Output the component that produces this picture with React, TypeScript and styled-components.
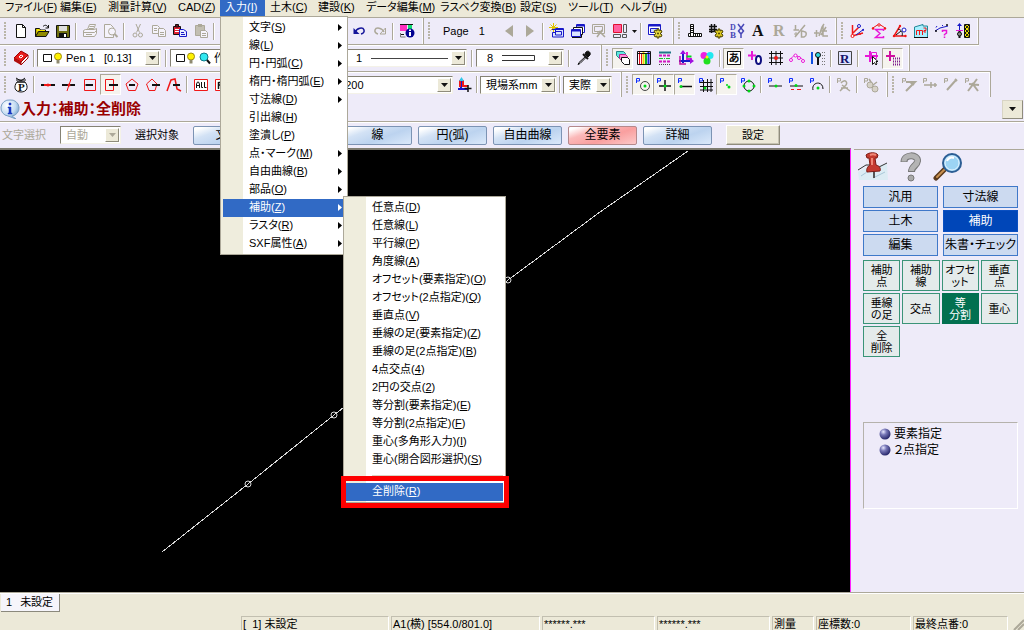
import React, { ReactNode } from "react";
import styled, { createGlobalStyle, css } from "styled-components";

const GlobalStyle = createGlobalStyle`
  *, *::before, *::after { box-sizing: border-box; }
  body { margin: 0; background: #ece9d8; }
  body, button, select, input {
    font-family: "Liberation Sans", "Noto Sans CJK JP", sans-serif;
    font-size: 11px;
    line-height: 14px;
    font-feature-settings: "palt";
    color: #000;
  }
  button { margin: 0; padding: 0; border: 0; background: none; white-space: nowrap; }
`;

const Page = styled.div`
  display: flex;
  flex-direction: column;
  min-height: 100vh;
  background: #eeebf9;
`;

/* ---------- menu bar ---------- */

const MenuBar = styled.nav`
  display: flex;
  height: 18px;
  padding-bottom: 1px;
  background: #ece9d8;
  border-bottom: 1px solid #aca899;
`;

const MenuSlot = styled.div<{ $w: number }>`
  position: relative;
  flex: 0 0 ${(p) => p.$w}px;
  min-width: 0;
`;

const MenuTitle = styled.button<{ $open?: boolean }>`
  width: 100%;
  height: 16px;
  padding-left: 5px;
  padding-bottom: 2px;
  text-align: left;
  color: ${(p) => (p.$open ? "#fff" : "#000")};
  background: ${(p) => (p.$open ? "#316ac5" : "transparent")};
`;

const Popup = styled.div<{ $sub?: boolean }>`
  position: absolute;
  z-index: ${(p) => (p.$sub ? 30 : 20)};
  top: ${(p) => (p.$sub ? "-3px" : "100%")};
  left: ${(p) => (p.$sub ? "calc(100% - 2px)" : "0")};
  width: ${(p) => (p.$sub ? 163 : 128)}px;
  padding: 2px 2px 1px;
  border: 1px solid #aca899;
  background: linear-gradient(90deg, #efeddd 22px, #fff 22px);
`;

const EntryBox = styled.div`
  position: relative;
`;

const Entry = styled.button<{ $on?: boolean }>`
  display: flex;
  align-items: center;
  justify-content: space-between;
  width: 100%;
  height: 18px;
  padding: 0 3px 2px 26px;
  color: ${(p) => (p.$on ? "#fff" : "#000")};
  background: ${(p) => (p.$on ? "#316ac5" : "transparent")};
`;

const Separator = styled.hr`
  height: 14px;
  margin: 0 0 0 26px;
  border: 0;
  background: linear-gradient(transparent 6px, #d8d4c4 6px, #d8d4c4 8px, transparent 8px);
`;

const RedFrame = styled.span`
  position: absolute;
  z-index: 40;
  inset: -7px -6px -7px -5px;
  border: 5px solid #fe0000;
  pointer-events: none;
`;

/* ---------- toolbars ---------- */

const ToolRow = styled.div<{ $line?: "top" | "bottom" }>`
  display: flex;
  align-self: flex-start;
  min-width: ${(p) => (p.$line ? "0" : "100%")};
  height: ${(p) => (p.$line === "bottom" ? 27 : 26)}px;
  ${(p) => p.$line === "bottom" && css`border-bottom: 1px solid #aca899; box-shadow: 0 1px #fff;`}
  ${(p) => p.$line === "top" && css`border-top: 1px solid #aca899; box-shadow: inset 0 1px #fff;`}
`;

const Band = styled.div<{ $w: number }>`
  display: flex;
  align-items: center;
  flex: 0 0 ${(p) => p.$w}px;
  border-right: 1px solid #aca899;
  box-shadow: inset -1px 0 #fbfaff;
`;

const Group = styled.div<{ $end?: number }>`
  display: flex;
  align-items: center;
  ${(p) => p.$end !== undefined && css`margin-left: auto; padding-right: ${p.$end}px;`}
`;

const Grip = styled.span`
  flex: 0 0 10px;
  height: 18px;
  background: repeating-linear-gradient(#b9b5a8 0 2px, transparent 2px 3px) 4px 0 / 2px 100% no-repeat;
`;

const Divider = styled.span<{ $wide?: boolean }>`
  flex: 0 0 ${(p) => (p.$wide ? 9 : 6)}px;
  height: 17px;
  background: linear-gradient(90deg, #aca899 50%, #fff 50%) center / 2px 100% no-repeat;
`;

const ToolButton = styled.button<{ $pressed?: boolean; $narrow?: boolean }>`
  display: flex;
  align-items: center;
  justify-content: center;
  flex: none;
  width: ${(p) => (p.$narrow ? 8 : 21)}px;
  height: 21px;
  border: 1px solid transparent;
  ${(p) =>
    p.$pressed &&
    css`
      border-color: #aca899 #fff #fff #aca899;
      background: #f5f3ee;
    `}
`;

const IconArt = styled.svg`
  flex: none;
  overflow: visible;
`;

const PageLabel = styled.span`
  display: flex;
  gap: 10px;
  padding-left: 9px;
`;

const Combo = styled.div<{ $w: number; $inset?: boolean }>`
  display: flex;
  align-items: center;
  gap: 3px;
  flex: 0 0 ${(p) => p.$w}px;
  height: 18px;
  padding: 1px 1px 1px ${(p) => (p.$inset ? 10 : 5)}px;
  border: 1px solid;
  border-color: #858274 #f4f2e8 #f4f2e8 #858274;
  background: #fff;
`;

const Choice = styled.select<{ $w?: number }>`
  appearance: none;
  flex: ${(p) => (p.$w ? `0 0 ${p.$w}px` : "1")};
  min-width: 0;
  height: 14px;
  padding: 0;
  border: 0;
  background: transparent;
  opacity: 1;
  &:disabled { color: #aca899; }
`;

const Arrow = styled.span`
  display: flex;
  align-items: center;
  justify-content: center;
  flex: 0 0 14px;
  height: 14px;
  margin-left: auto;
  border: 1px solid;
  border-color: #fff #8f8c7c #8f8c7c #fff;
  background: #ece9d8;
`;

/* ---------- command title and option row ---------- */

const TitleRow = styled.div`
  display: flex;
  align-items: center;
  justify-content: space-between;
  height: 24px;
  padding: 0 1px 0 0;
`;

const CommandTitle = styled.h1`
  display: flex;
  align-items: center;
  gap: 1px;
  margin: 0;
  font-size: 15px;
  line-height: 20px;
  color: #990000;
`;

const DropButton = styled.button`
  display: flex;
  align-items: center;
  justify-content: center;
  width: 21px;
  height: 19px;
  border: 1px solid;
  border-color: #d8d4c4 #8f8c7c #8f8c7c #d8d4c4;
  background: #ece9d8;
`;

const OptionRow = styled.div`
  display: flex;
  align-items: center;
  gap: 14px;
  height: 27px;
  padding: 0 2px;
  border-top: 1px solid #aca899;
  box-shadow: inset 0 1px #fff;
`;

const OptionLabel = styled.label<{ $dim?: boolean }>`
  flex: 0 0 44px;
  white-space: nowrap;
  color: ${(p) => (p.$dim ? "#aca899" : "#000")};
`;

const Filters = styled.div`
  display: flex;
  gap: 6px;
`;

const Filter = styled.button<{ $hot?: boolean }>`
  width: 69px;
  height: 19px;
  font-size: 12px;
  border: 1px solid ${(p) => (p.$hot ? "#b5898c" : "#7c93b4")};
  border-radius: 2px;
  background: ${(p) =>
    p.$hot
      ? "linear-gradient(160deg, #fff 0 8%, #fbb9b9 30%, #f99f9f 60%, #fcc9c9)"
      : "linear-gradient(160deg, #fff 0 8%, #d3e2f5 30%, #bcd3ef 60%, #dbe9fa)"};
`;

const PlainButton = styled.button`
  width: 54px;
  height: 20px;
  border: 1px solid;
  border-color: #fff #8f8c7c #8f8c7c #fff;
  box-shadow: inset -1px -1px #c5c2b2;
  background: #ece9d8;
`;

/* ---------- work area ---------- */

const WorkArea = styled.main`
  display: flex;
  flex: 1;
`;

const Canvas = styled.section`
  flex: 1;
  position: relative;
  min-height: 360px;
  border-top: 2px solid #7d7b6f;
  border-right: 1px solid #ff20ff;
  background: #000;
`;

const Drawing = styled.svg`
  position: absolute;
  inset: 0;
  width: 100%;
  height: 100%;
`;

const SidePanel = styled.aside`
  flex: 0 0 173px;
  padding: 0 6px 0 12px;
  background: linear-gradient(#aca899, #aca899) 3px 1px / 100% 1px no-repeat, #eeebf9;
`;

const PanelTools = styled.div`
  display: flex;
  align-items: center;
  gap: 10px;
  height: 38px;
  margin-left: -6px;
`;

const CategoryGrid = styled.div`
  display: grid;
  grid-template-columns: 1fr 1fr;
  gap: 2px 5px;
`;

const Category = styled.button<{ $on?: boolean }>`
  height: 22px;
  font-size: 12px;
  border: 1px solid ${(p) => (p.$on ? "#0a4fc0" : "#3f78c9")};
  color: ${(p) => (p.$on ? "#fff" : "#000")};
  background: ${(p) => (p.$on ? "#0046b8" : "#ccdaf0")};
`;

const CommandGrid = styled.div`
  display: grid;
  grid-template-columns: repeat(4, 1fr);
  gap: 2px;
  margin-top: 4px;
`;

const Command = styled.button<{ $on?: boolean }>`
  height: 31px;
  line-height: 12px;
  white-space: pre-line;
  border: 1px solid ${(p) => (p.$on ? "#027050" : "#3a9478")};
  color: ${(p) => (p.$on ? "#fff" : "#000")};
  background: ${(p) => (p.$on ? "#027050" : "#e4ebeb")};
`;

const ModeBox = styled.div`
  display: flex;
  flex-direction: column;
  align-items: flex-start;
  height: 87px;
  margin-top: 65px;
  padding: 3px 0 0 15px;
  border: 1px solid;
  border-color: #b5b2ac #fff #fff #b5b2ac;
`;

const Mode = styled.button`
  display: flex;
  align-items: center;
  gap: 3px;
  height: 16px;
  font-size: 12px;
`;

/* ---------- footer ---------- */

const SheetBar = styled.div`
  height: 24px;
  padding-left: 1px;
  border-top: 1px solid #aca899;
  box-shadow: inset 0 1px #fff;
  background: #ece9d8;
`;

const SheetTab = styled.button`
  display: flex;
  gap: 8px;
  align-items: center;
  height: 18px;
  margin-top: 1px;
  padding: 0 6px 2px 5px;
  border: solid #8b897c;
  border-width: 0 1px 1px 0;
  background: #f6f5fb;
`;

const StatusBar = styled.footer`
  display: flex;
  justify-content: flex-end;
  gap: 2px;
  height: 14px;
  background: #ece9d8;
`;

const StatusCell = styled.span<{ $w: number }>`
  flex: 0 0 ${(p) => p.$w}px;
  height: 14px;
  padding-left: 1px;
  overflow: hidden;
  white-space: pre;
  border: solid;
  border-width: 1px 1px 0 1px;
  border-color: #c2bfb0 #fff #fff #c2bfb0;
`;

const SizeGrip = styled.svg`
  flex: 0 0 14px;
  height: 14px;
`;

/* ---------- drawings ---------- */

const K = "#111";
const R = "#f01818";
const M = "#e818d8";
const B = "#1818c8";
const G = "#00d818";
const Y = "#f4e800";
const D = "#aca899";

const line = (d: string, stroke = K, width = 1) => (
  <path d={d} stroke={stroke} strokeWidth={width} fill="none" />
);
const shape = (d: string, fill: string, stroke = "none") => <path d={d} fill={fill} stroke={stroke} />;
const dot = (x: number, y: number, r: number, fill: string, stroke = "none") => (
  <circle cx={x} cy={y} r={r} fill={fill} stroke={stroke} />
);
const glyph = (s: string, x: number, y: number, size: number, fill: string, serif = true) => (
  <text
    x={x}
    y={y}
    fontSize={size}
    fontWeight="bold"
    fill={fill}
    fontFamily={serif ? '"Liberation Serif", "Noto Sans CJK JP", serif' : '"Liberation Sans", sans-serif'}
  >
    {s}
  </text>
);
const snapP = (c = "#1030ff") => line("M1.5 6V1.5H4.5V4H2", c);

const gearShape = (fill: string, stroke: string) => (
  <g>
    <path d="M10 6h2v2l2-1 1 2-2 1.500 2 1.500-1 2-2-1v2h-2v-2l-2 1-1-2 2-1.500-2-1.500 1-2 2 1z" fill={fill} stroke={stroke} />
    <circle cx="11" cy="10.500" r="1" fill={stroke} />
  </g>
);

const icons: Record<string, ReactNode> = {
  new: <>{shape("M3.500 1.500H9.500L12.500 4.500V14.500H3.500Z", "#fff", K)}{line("M9.500 1.500V4.500H12.500")}</>,
  open: <>{shape("M1.500 13.500V5.500H5.500L6.500 7H11.500V9", "#c9b800", K)}{shape("M1.500 13.500L4.500 8.500H15L12 13.500Z", "#8f8a00", K)}{shape("M3 8H11V7H6L5 6H3Z", Y)}{line("M9 3.500C11 1.500 13 2 14 4.500M14.500 2V5H11.500")}</>,
  save: <>{shape("M1.500 2.500H14.500V14.500H1.500Z", "#6f6f10", K)}{shape("M4 3H12V8H4Z", "#dedede")}{shape("M4 10H12V14H4Z", K)}{shape("M9 11H11V14H9Z", "#fff")}</>,
  print: <>{shape("M5.500 6.500L7.500 1.500H13.500L11.500 6.500", "#f5f3fb", D)}{shape("M1.500 7.500L3.500 6.500H12.500L14.500 5.500V10.500L12.500 13.500H1.500Z", "#f5f3fb", D)}{line("M2 9.500H12.500M7.500 3.500H12M7 5.500H11.500M12.500 9.500L14.500 7.500M4 11.500H10", D)}</>,
  preview: <>{shape("M1.500 1.500H7.500L10.500 4.500V14.500H1.500Z", "#f5f3fb", D)}{dot(9, 8.500, 3.500, "#f5f3fb", D)}{line("M11.500 11L14.500 14", D, 2)}</>,
  cut: <>{line("M6 1L9.500 9.500M10.500 1L6.500 9.500", D)}{dot(5, 12, 2, "none", D)}{dot(10.500, 12, 2, "none", D)}</>,
  copy: <>{shape("M1.500 2.500H6.500L8.500 4.500V10.500H1.500Z", "#f5f3fb", D)}{shape("M7.500 5.500H12.500L14.500 7.500V13.500H7.500Z", "#f5f3fb", D)}{line("M3 5.500H6M3 7.500H6M9 9.500H13M9 11.500H13", D)}</>,
  pasteRed: <>{shape("M1.500 3.500H8.500V11.500H1.500Z", "#e02030", K)}{line("M3 6.500H7M3 8.500H7", "#fff")}{shape("M3.500 1.500H6.500V4H3.500Z", "#801018", K)}{shape("M7.500 6.500H11.500L14.500 8.500V13.500H7.500Z", "#e8ecff", B)}{line("M9 9.500H12M9 11.500H13", B)}</>,
  clip: <>{shape("M2.500 2.500H11.500V12.500H2.500Z", "#c2beb2", D)}{shape("M5 1H9V4H5Z", D)}{shape("M7.500 7.500H12.500L14.500 9.500V14.500H7.500Z", "#f5f3fb", D)}{line("M9 10.500H13M9 12.500H13", D)}</>,
  undo: <>{line("M4 9.500C6 4.500 12 4 13 7C13.500 9 12 10.500 10 11", "#15159a", 1.500)}{shape("M2.500 5V11H8.500Z", "#15159a")}</>,
  redo: <>{line("M12 9C10 4.500 4 4 3 7C2.500 9 4 10.500 6 11", D, 1.500)}{shape("M13.500 5V11H8Z", "none", D)}</>,
  info: <>{shape("M1 2H8V8H1Z", "#ff30c0")}{shape("M9 2H13V8H9Z", "#10e070")}{line("M1 1.500H14M1 11.500H5", K)}{dot(11, 10, 4.500, "#000090")}{line("M11 6.500V8M11 9V13", "#fff", 2)}{line("M1.500 10V14H6.500", "#777")}</>,
  prev: shape("M12 2V14L4 8Z", D),
  next: shape("M4 2V14L12 8Z", D),
  caret: shape("M0 0H7L3.500 4Z", K),
  viewNew: <>{line("M4.500 0V9M0 4.500H9M1.500 1.500L7.500 7.500M7.500 1.500L1.500 7.500", "#e0c400", 1)}{shape("M6.500 5.500H14.500V14H3.500V9.500H6.500Z", "#dce6ff", B)}{line("M6.500 8.500H12.500V12H6.500Z", B)}{line("M3 6.500H15", B)}</>,
  viewStack: <>{shape("M6.500 1.500H14.500V9.500H6.500Z", "#fff", B)}{line("M7 2.500H14", B, 2)}{shape("M3.500 4.500H12.500V11.500H3.500Z", "#fff", K)}{shape("M1.500 6.500H10.500V13.500H1.500Z", "#dce6ff", B)}{line("M2 7.500H10", B, 2)}{line("M2 14.500H11.500V12")}</>,
  viewOff: <>{line("M1.500 1.500H13.500V10.500H1.500ZM3.500 3.500H11.500V8.500H3.500Z", D)}{line("M6 14L11 7M8 8L14 14M6 10L11 10", D, 1.500)}</>,
  tiles: <>{shape("M1.500 1.500H9.500V9.500H1.500Z", "#ff60a0", "#e01030")}{line("M11.500 1.500H14.500V9.500H11.500ZM1.500 11.500H8.500V14.500H1.500ZM10.500 11.500H14.500V14.500H10.500Z", "#555")}</>,
  viewGear: <>{shape("M1.500 1.500H13.500V11.500H1.500Z", "#fff", B)}{line("M2 2.500H13", B, 2)}{shape("M3.500 5.500H11.500V9.500H3.500Z", "#ccd8ff", B)}{gearShape("#e8d840", "#4c4400")}</>,
  ruler: <>{shape("M3.500 1.500H6.500V10.500H14.500V13.500H1.500V10.500H3.500Z", "#fff", K)}{line("M3.500 3.500H6.500M3.500 5.500H6.500M3.500 7.500H6.500M3.500 9.500H6.500M3.500 10V14M6.500 10V14M8.500 10V14M10.500 10V14M12.500 10V14", K)}</>,
  gridGear: <>{line("M3.500 1V10M6.500 1V8M1 3.500H9M1 6.500H9M1 8.500H7", K, 1.500)}{gearShape("#e0cc20", "#4c4400")}</>,
  bxdy: <>{glyph("D", 1, 7, 8, "#4848b8")}{glyph("B", 1, 15, 9, "#4848b8")}{line("M9 1L12 5L15 1M12 5L9.500 8L12 11L14.500 8L12 5M12 11V15", "#4848b8", 1.500)}</>,
  bigA: glyph("A", 2, 13, 16, K),
  bigR: glyph("R", 2, 13, 16, D),
  fraction: <>{line("M3.500 2V7M1.500 7H7M3 14L13 2", D, 1.500)}{line("M9.500 8V14H12C15 13 15 9 12 8.500Z", D, 1.500)}{line("M2 11H5M4 9V13", D)}</>,
  kanjiPen: <>{line("M1 10H6M3.500 7V14M6 13L9 4L11 1M10 3V13H15M8 8H14M13 4L8 12", D, 1.500)}</>,
  coordR: <>{line("M2.500 14V2M2 13L13 10M3 10L9 4", R, 1.500)}{line("M6 12L14 6", B)}{dot(2.500, 13, 1.500, "#fff", R)}{dot(9, 3, 1.500, "#fff", B)}{dot(13, 7, 1, B)}{dot(10, 11, 1, R)}</>,
  sigma: <>{line("M1 5.500L8 1L15 5.500", R, 1)}{line("M12.500 8V6.500H4.500L9 10.500L4.500 14.500H12.500V13", M, 1.500)}{dot(8, 2, 1.200, "#fff", R)}{dot(2, 5.500, 1.200, R)}{dot(14, 5.500, 1.200, R)}</>,
  angle: <>{line("M8 3L2 13H14", R, 1.500)}{line("M6 6C10 7 11 10 10 13M4 12L9 8", K)}{dot(12, 7, 2, "#fff", B)}{dot(8, 3, 1.200, R)}{dot(2, 13, 1.200, R)}{dot(13.500, 13, 1.200, R)}</>,
  area: <>{shape("M1.500 4L10 1.500V3H14.500V14.500H1.500Z", "#a8f0ff", "#208898")}{line("M3.500 12V7.500H9.500V12M6.500 8V12M10.500 5H13V7.500H11V9H13", R)}{line("M1 14.500H15", K)}</>,
  query: <>{line("M1 8L6 5L14 3M2 4.500L3 3M8 2L9 3", B)}{dot(2, 8, 1, K)}{dot(13, 2, 1, K)}{line("M8.500 9V7.500H12.500V10L10.500 11.500V12.500M10.500 13.500V15", M, 1.500)}</>,
  legend: <>{line("M4.500 1V7", B)}{shape("M4.500 0L7 3H2Z", B)}{line("M1 7.500H8", M)}{line("M4.500 8V15", K, 2)}{dot(4.500, 11, 2, "#888", K)}{shape("M9.500 1.500H14.500V14.500H9.500Z", Y, K)}{line("M10 2L14.500 6L10 10L14.500 14M14 2L10 6L14 10L10 14", K)}</>,
  book: <>{shape("M1 8L8 1L15 5L8 12Z", "#e81c1c", "#a00000")}{shape("M1 8L8 12V15L1 11Z", "#b00c0c")}{shape("M8 12L15 5V8L8 15Z", "#fff", "#a00000")}{line("M6 7L8 5L10 6L8 8Z", "#fff")}</>,
  dropper: <>{shape("M10 2C12 0 15 2 14 5L12 7L9 4Z", K, K)}{line("M7 4L12 9", K, 2)}{line("M10 6L3 12.500L2 14.500L4 13.500L10.500 7", K)}</>,
  layers: <>{shape("M1.500 1.500H8.500L10.500 3.500V8.500H4.500L1.500 5.500Z", "#60e8e0", "#208888")}{shape("M4.500 4.500H10.500L12.500 6.500V11.500H7.500L4.500 8.500Z", "#ff90d8", "#c02090")}{shape("M6.500 7.500H12.500L14.500 9.500V14.500H9.500L6.500 11.500Z", "#fff", K)}</>,
  pens: <>{shape("M1.500 1.500H14.500V14.500H1.500Z", "#fff", K)}{line("M3.500 2V14M5.500 4V14", "#e01020")}{line("M7.500 2V14", "#f0d000", 2)}{line("M10 4V14", "#10b020", 2)}{line("M12.500 2V14", "#2020e0", 2)}{line("M2 3.500H14", K)}</>,
  styles: <>{line("M2 2.500H14", "#207888", 2)}<path d="M2 5.500H14M2 11.500H14" stroke="#d018c0" strokeWidth="2" strokeDasharray="3 1" /><path d="M2 8.500H14" stroke="#20b830" strokeDasharray="4 1 1 1" /><path d="M2 14.500H14" stroke="#444" strokeDasharray="1 1" /></>,
  axes: <>{line("M5 1V13M1 11H14", B, 2)}{line("M9 2V9H14", M, 2)}{shape("M2 4H8L5 0ZM12 8L16 11L12 14Z", "#a010e0")}{line("M8.500 6.500H13.500", G, 2)}{line("M2 6V14H8", "#c010a0", 1.500)}</>,
  colors: <>{dot(5, 5.500, 3.500, "#f020e0")}{dot(11, 5.500, 3.500, "#20e8f0")}{dot(8, 11, 3.500, "#20e020")}{dot(8, 7, 1.500, "#fff000")}</>,
  hiragana: <>{shape("M1.500 1.500H14.500V14.500H1.500Z", "#fff", K)}{glyph("あ", 2.500, 12, 11, K)}</>,
  plusZero: <>{line("M5 1V10M1 5.500H9", M, 2)}<ellipse cx="11.500" cy="10" rx="2.500" ry="4" fill="#fff" stroke="#101080" strokeWidth="2" /></>,
  grid: <>{line("M3.500 1V15M8 1V15M12.500 1V15M1 3.500H15M1 8H15M1 12.500H15", K)}{dot(8, 8, 2, R)}</>,
  arcPts: <>{line("M1 11C3 6 6 4 9 6.500C11 9 13 7 14.500 11", M)}{dot(2, 10, 1.500, "#fff", M)}{dot(6.500, 5.500, 1.500, "#fff", M)}{dot(10, 8, 1.500, "#fff", M)}{dot(14, 11, 1.500, "#fff", M)}</>,
  hilite: <>{line("M2 2V14", "#1050e0", 2)}{dot(8, 5, 2.500, "#30d8e0", K)}{line("M8 7V15", K, 2)}<path d="M12.500 2V15M14.500 2V15" stroke="#777" strokeDasharray="1 2" /></>,
  boxR: <>{shape("M1.500 1.500H14.500V14.500H1.500Z", "#dfe3ff", "#444")}{glyph("R", 3, 13, 13, "#10106a")}</>,
  pickCross: <>{line("M6 1V12M1 6H14", M, 2)}{line("M7.500 2.500H12.500V8.500H7.500Z", M)}{shape("M8.500 6.500V14.500L10.500 12.500L12 15L13 14L12 11.500H14Z", "#fff", K)}</>,
  addList: <>{line("M5 1V11M1 6H10", "#d010a0", 2)}<path d="M8 8.500H15M8 11.500H15M8 14.500H15" stroke="#802090" strokeDasharray="1 1" strokeWidth="2" /></>,
  pot: <>{shape("M4 5C0 10 2 15 8 15C14 15 16 10 12 5Z", "#fff", K)}{line("M3 1L8 4L12 1M4 5H12M3 3L13 3", K)}{glyph("P", 5, 14, 11, K)}</>,
  segMid: <>{line("M1 8H15", K, 2)}{line("M4 8H11", R, 2)}{dot(8, 8, 1.500, R)}</>,
  segCross: <>{line("M10 2L6 14", R)}{line("M1 8H14", K, 2)}{dot(8, 8, 1.500, R)}</>,
  rectLine: <>{line("M2.500 2.500H13.500V13.500H2.500Z", R)}{line("M3.500 8H11", K, 2)}</>,
  rectPlus: <>{line("M2.500 2.500H10.500V13.500H2.500Z", R)}{line("M6 8H15", K, 2)}</>,
  penta: <>{line("M8 2L14 7L11.500 13.500H4.500L2 7Z", R)}{line("M5 8H11", K, 2)}</>,
  pentaOut: <>{line("M7 2L12 7L10 13.500H4L1.500 7Z", R)}{line("M7 8H15", K, 2)}</>,
  curve: <>{line("M1 14L5 3L9 2L11 12L15 14", R, 1.500)}{line("M7 8H14", K, 2)}</>,
  all: <>{shape("M1.500 2.500H14.500V13.500H1.500Z", "#fff", R)}{line("M3.500 11V7L4.500 5H5.500L6.500 7V11M3.500 8.500H6.500M8.500 5V10.500H10M11.500 5V10.500H13.500", K)}</>,
  attr: <>{shape("M1.500 2.500H14.500V13.500H1.500Z", "#fff", R)}{line("M4.500 5.500H12M4.500 5V12M5 8H12M8.500 8V12M6 11.500H12", K, 1.500)}</>,
  cadAxis: <>{line("M5 2V12M2 12H12", B, 2)}{line("M4 3V10M7 3V9H12", R, 2)}{shape("M3 4H8L5.500 0Z", "#30c8e8")}{line("M12 8V15M8.500 11.500H15.500", K, 1.500)}</>,
  snapCircle: <>{snapP()}{dot(10, 9, 4.500, "none", "#444")}{dot(10, 9, 1.500, G)}</>,
  snapCross: <>{snapP()}{line("M9 3V14M3 9H15", K, 1.500)}{dot(9, 9, 1.500, G)}</>,
  snapEnd: <>{snapP()}{line("M4 9.500H15", K, 1.500)}{dot(4, 9.500, 1.500, G)}</>,
  snapGrid: <>{line("M5.500 3V15M9.500 2V15M13 2V15M2 5.500H15M2 9.500H15M2 13H15", K)}{snapP()}{dot(7, 11, 1.500, G)}</>,
  snapDot: <>{snapP()}{dot(8, 8, 1, G)}{dot(10, 10, 1.500, G)}</>,
  snapQuad: <>{snapP()}{dot(9, 9, 5, "none", K)}{dot(9, 4, 1.500, G)}{dot(9, 14, 1.500, G)}{dot(4, 9, 1.500, G)}{dot(14, 9, 1.500, G)}</>,
  snapMid: <>{snapP()}{line("M2 9H15", K)}{dot(9, 9, 1.500, G)}</>,
  snapPerp: <>{snapP()}{line("M2 9H15", K)}{dot(8, 8.500, 1.500, G)}{line("M3 12.500H6M9 12.500H13", R)}</>,
  snapArc: <>{snapP()}{line("M4 13C2 5 14 3 14 12", K)}{dot(9, 11, 1.500, G)}</>,
  offSnap1: <>{snapP(D)}{line("M5 6C9 1 13 6 9 9L4 14M6 8L14 14M5 11H12", D, 1.500)}</>,
  offSnap2: <>{snapP(D)}{line("M6 2L10 8L14 5", D, 1.500)}{dot(7, 8, 3, "#d6d2c8", D)}{dot(12, 12, 3, "#d6d2c8", D)}</>,
  offLine1: <>{snapP(D)}{line("M5 5H14L5 14M9 5L13 8", D, 2)}</>,
  offLine2: <>{snapP(D)}{line("M2 8H15M9 5V11M13 6V10", D, 1.500)}</>,
  offLine3: <>{snapP(D)}{line("M4 13L13 3M12 2L14 4", D, 2)}</>,
  offLine4: <>{snapP(D)}{line("M13 2L4 14M5 7L15 8M8 6L14 14", D, 2)}</>,
};

const Icon = ({ name }: { name: string }) => (
  <IconArt width="16" height="16" viewBox="0 0 16 16" aria-hidden="true">{icons[name]}</IconArt>
);

const Caret = () => (
  <svg width="7" height="4" viewBox="0 0 7 4" aria-hidden="true">{icons.caret}</svg>
);

const DimCaret = () => (
  <svg width="7" height="4" viewBox="0 0 7 4" aria-hidden="true">{shape("M0 0H7L3.500 4Z", D)}</svg>
);

/* ---------- parts ---------- */

type Tool = string | { icon: string; pressed?: boolean };

const sep = "|";

const Tools = ({ list }: { list: Tool[] }) => (
  <>
    {list.map((t, i) => {
      if (t === sep) return <Divider key={i} />;
      const name = typeof t === "string" ? t : t.icon;
      return (
        <ToolButton key={i} type="button" aria-label={name} $pressed={typeof t !== "string" && t.pressed}>
          <Icon name={name} />
        </ToolButton>
      );
    })}
  </>
);

const on = (icon: string): Tool => ({ icon, pressed: true });

interface ComboBoxProps {
  label: string;
  value: string;
  width: number;
  lead?: ReactNode;
  preview?: ReactNode;
  id?: string;
  disabled?: boolean;
}

const ComboBox = ({ label, value, width, lead, preview, id, disabled }: ComboBoxProps) => (
  <Combo $w={width} $inset={Boolean(preview)}>
    {lead}
    <Choice id={id} aria-label={label} disabled={disabled} $w={preview ? 12 : undefined}>
      <option>{value}</option>
    </Choice>
    {preview}
    <Arrow>{disabled ? <DimCaret /> : <Caret />}</Arrow>
  </Combo>
);

const PenSwatch = () => (
  <svg width="20" height="14" viewBox="0 0 20 14" aria-hidden="true">
    {shape("M0.500 3.500H8.500V10.500H0.500Z", "#fff", K)}
    <circle cx="15" cy="5.500" r="3.500" fill="#fff200" stroke="#a08c10" />
    {shape("M13.500 9H16.500V12.500H13.500Z", "#8f8a70")}
  </svg>
);

const Lens = () => (
  <svg width="12" height="14" viewBox="0 0 12 14" aria-hidden="true">
    <circle cx="5" cy="6" r="4" fill="#30e8f0" stroke="#107888" />
    {line("M8 9L11 12.500", K, 2)}
  </svg>
);

const Mnemonic = ({ text }: { text: string }) => {
  const i = text.lastIndexOf("(");
  return (
    <span>
      {text.slice(0, i + 1)}
      <u>{text[i + 1]}</u>
      {text.slice(i + 2)}
    </span>
  );
};

const inputMenu: [string, boolean][] = [
  ["文字(S)", true],
  ["線(L)", true],
  ["円・円弧(C)", true],
  ["楕円・楕円弧(E)", true],
  ["寸法線(D)", true],
  ["引出線(H)", false],
  ["塗潰し(P)", false],
  ["点・マーク(M)", true],
  ["自由曲線(B)", true],
  ["部品(O)", true],
  ["補助(Z)", true],
  ["ラスタ(R)", true],
  ["SXF属性(A)", true],
];

const helperMenu = [
  "任意点(D)",
  "任意線(L)",
  "平行線(P)",
  "角度線(A)",
  "オフセット(要素指定)(O)",
  "オフセット(2点指定)(Q)",
  "垂直点(V)",
  "垂線の足(要素指定)(Z)",
  "垂線の足(2点指定)(B)",
  "4点交点(4)",
  "2円の交点(2)",
  "等分割(要素指定)(E)",
  "等分割(2点指定)(F)",
  "重心(多角形入力)(I)",
  "重心(閉合図形選択)(S)",
];

const menuTitles: [string, number][] = [
  ["ファイル(F)", 55],
  ["編集(E)", 48],
  ["測量計算(V)", 70],
  ["CAD(Z)", 47],
  ["入力(I)", 45],
  ["土木(C)", 48],
  ["建設(K)", 48],
  ["データ編集(M)", 74],
  ["ラスベク変換(B)", 80],
  ["設定(S)", 48],
  ["ツール(T)", 52],
  ["ヘルプ(H)", 54],
];

const HelperMenu = () => (
  <Popup $sub>
    {helperMenu.map((t) => (
      <Entry key={t} type="button">
        <Mnemonic text={t} />
      </Entry>
    ))}
    <Separator />
    <EntryBox>
      <Entry type="button" $on>
        <Mnemonic text="全削除(R)" />
      </Entry>
      <RedFrame />
    </EntryBox>
  </Popup>
);

const InputMenu = () => (
  <Popup>
    {inputMenu.map(([t, more]) => (
      <EntryBox key={t}>
        <Entry type="button" $on={t === "補助(Z)"}>
          <Mnemonic text={t} />
          {more && (
            <svg width="4" height="7" viewBox="0 0 4 7" aria-hidden="true">
              <path d="M0 0V7L4 3.500Z" fill="currentColor" />
            </svg>
          )}
        </Entry>
        {t === "補助(Z)" && <HelperMenu />}
      </EntryBox>
    ))}
  </Popup>
);

const InfoBubble = () => (
  <svg width="20" height="20" viewBox="0 0 20 20" aria-hidden="true">
    <defs>
      <radialGradient id="bubble" cx="35%" cy="30%" r="75%">
        <stop offset="0" stopColor="#fff" />
        <stop offset="0.6" stopColor="#c4dcf2" />
        <stop offset="1" stopColor="#6f9cc8" />
      </radialGradient>
    </defs>
    <path d="M10 1a8 8 0 1 1 2 16l4 3-8-3A8 8 0 0 1 10 1z" fill="url(#bubble)" stroke="#7ba0c4" />
    <path d="M8 8h3v6h1v1H8v-1h1V9H8zM9 4h2v2H9z" fill="#1838c0" stroke="#1838c0" strokeWidth="0.500" />
  </svg>
);

const Pin = () => (
  <svg width="32" height="30" viewBox="0 0 32 30" aria-hidden="true">
    <path d="M1 20L9 15L30 12L31 28H2Z" fill="#dcecf4" />
    <path d="M1 18L9 13H14M20 16L30 11" stroke="#333" fill="none" />
    <path d="M4 24L10 20M16 26L28 20" stroke="#a9c8d8" fill="none" />
    <path d="M9 3C12 0 19 0 21 3L20 6H18L19 13C23 14 24 17 23 19L10 20C9 17 11 14 13 13L12 6H10Z" fill="#c43a30" stroke="#7c1a14" />
    <path d="M13 3C15 2 17 2 19 3M15 6V13" stroke="#f08878" strokeWidth="2" fill="none" />
    <path d="M17 20V26" stroke="#555" strokeWidth="2" />
  </svg>
);

const Question = () => (
  <svg width="24" height="30" viewBox="0 0 24 30" aria-hidden="true">
    <path d="M5 10C5 2 19 2 18.500 9C18 14 12.500 14 12.500 20" fill="none" stroke="#777" strokeWidth="7" />
    <path d="M5 9.500C5 2 19 2 18.500 9C18 14 12.500 14 12.500 19" fill="none" stroke="#b4b4b4" strokeWidth="5" />
    <circle cx="12" cy="26" r="3" fill="#aaa" stroke="#777" />
  </svg>
);

const Magnifier = () => (
  <svg width="30" height="30" viewBox="0 0 30 30" aria-hidden="true">
    <path d="M12 17L3 26" stroke="#5a3a1c" strokeWidth="5" strokeLinecap="round" />
    <path d="M12 17L4 25" stroke="#c89050" strokeWidth="2" strokeLinecap="round" />
    <circle cx="19" cy="11" r="9" fill="#9cd4f4" stroke="#2c5e94" strokeWidth="2" />
    <circle cx="19" cy="11" r="7" fill="none" stroke="#e4f4ff" />
    <path d="M14 9C15 6 18 5 21 6" stroke="#fff" strokeWidth="2" fill="none" />
  </svg>
);

const Ball = () => (
  <svg width="12" height="12" viewBox="0 0 12 12" aria-hidden="true">
    <defs>
      <radialGradient id="ball" cx="35%" cy="30%" r="70%">
        <stop offset="0" stopColor="#e8e8ff" />
        <stop offset="0.4" stopColor="#7878b8" />
        <stop offset="1" stopColor="#28286c" />
      </radialGradient>
    </defs>
    <circle cx="6" cy="6" r="5.500" fill="url(#ball)" />
  </svg>
);

const divisionPoints = [
  [508, 130],
  [334, 265],
  [248, 334],
];

const filters = ["文字", "点", "線", "円(弧)", "自由曲線", "全要素", "詳細"];
const categories = ["汎用", "寸法線", "土木", "補助", "編集", "朱書・チェック"];
const commands = ["補助\n点", "補助\n線", "オフセ\nット", "垂直\n点", "垂線\nの足", "交点", "等\n分割", "重心", "全\n削除"];

const statusCells: [string, number][] = [
  ["[  1] 未設定", 148],
  ["A1(横) [554.0/801.0]", 149],
  ["******.***", 113],
  ["******.***", 113],
  ["測量", 42],
  ["座標数:0", 95],
  ["最終点番:0", 95],
];

export default function App() {
  return (
    <Page>
      <GlobalStyle />
      <MenuBar>
        {menuTitles.map(([t, w]) => (
          <MenuSlot key={t} $w={w}>
            <MenuTitle type="button" $open={t === "入力(I)"}>
              <Mnemonic text={t} />
            </MenuTitle>
            {t === "入力(I)" && <InputMenu />}
          </MenuSlot>
        ))}
      </MenuBar>

      <ToolRow $line="bottom">
        <Band $w={424}>
          <Grip />
          <Tools list={["new", "open", "save", sep, "print", "preview", sep, "cut", "copy", "pasteRed", "clip", sep]} />
          <Group $end={6}>
            <Tools list={["undo", "redo", sep, "info"]} />
          </Group>
        </Band>
        <Band $w={250}>
          <Grip />
          <PageLabel>
            <span>Page</span>
            <span>1</span>
          </PageLabel>
          <Group $end={8}>
            <Tools list={["prev", "next", sep, "viewNew", "viewStack", "viewOff", "tiles"]} />
            <ToolButton type="button" aria-label="tile options" $narrow>
              <svg width="5" height="3" viewBox="0 0 7 4" aria-hidden="true">{icons.caret}</svg>
            </ToolButton>
            <Tools list={[sep, "viewGear"]} />
          </Group>
        </Band>
        <Band $w={163}>
          <Grip />
          <Tools list={["ruler", "gridGear", "bxdy", "bigA", "bigR", "fraction", "kanjiPen"]} />
        </Band>
        <Band $w={142}>
          <Grip />
          <Tools list={["coordR", "sigma", "angle", "area", "query", "legend"]} />
        </Band>
      </ToolRow>

      <ToolRow>
        <Band $w={602}>
          <Grip />
          <Tools list={["book", sep]} />
          <ComboBox label="ペン" value={"Pen 1\u00a0\u00a0\u00a0[0.13]"} width={124} lead={<PenSwatch />} />
          <Divider $wide />
          <ComboBox label="レイヤ" value="作図" width={124} lead={<><PenSwatch /><Lens /></>} />
          <Group $end={7}>
            <ComboBox
              label="線種"
              value="1"
              width={118}
              preview={<svg width="77" height="3" aria-hidden="true">{line("M0 1.500H77", "#444")}</svg>}
            />
            <Divider $wide />
            <ComboBox
              label="線幅"
              value="8"
              width={88}
              preview={<svg width="34" height="7" aria-hidden="true">{line("M0 0.500H32.500V5.500H0", "#333")}</svg>}
            />
            <Divider $wide />
            <Tools list={["dropper"]} />
          </Group>
        </Band>
        <Band $w={308}>
          <Grip />
          <Tools
            list={[on("layers"), "pens", "styles", "axes", "colors", sep, on("hiragana"), "plusZero", "grid", "arcPts", "hilite", sep, "boxR", sep, "pickCross", on("addList")]}
          />
        </Band>
      </ToolRow>

      <ToolRow $line="top">
        <Band $w={622}>
          <Grip />
          <Tools list={["pot", sep, "segMid", "segCross", "rectLine", on("rectPlus"), "penta", "pentaOut", "curve", sep, "all", "attr"]} />
          <Group $end={9}>
            <ComboBox label="縮尺" value="1:200" width={123} />
            <Tools list={["cadAxis"]} />
            <Divider />
            <ComboBox label="座標系" value="現場系mm" width={76} />
            <Divider />
            <ComboBox label="寸法" value="実際" width={49} />
          </Group>
        </Band>
        <Band $w={266}>
          <Grip />
          <Tools
            list={[on("snapCircle"), on("snapCross"), on("snapEnd"), "snapGrid", on("snapDot"), "snapQuad", sep, "snapMid", "snapPerp", "snapArc", sep, "offSnap1", sep, "offSnap2"]}
          />
        </Band>
        <Band $w={103}>
          <Grip />
          <Tools list={["offLine1", "offLine2", "offLine3", "offLine4"]} />
        </Band>
      </ToolRow>

      <TitleRow>
        <CommandTitle>
          <InfoBubble />
          入力：補助：全削除
        </CommandTitle>
        <DropButton type="button" aria-label="コマンド履歴">
          <Caret />
        </DropButton>
      </TitleRow>

      <OptionRow>
        <OptionLabel $dim htmlFor="text-pick">文字選択</OptionLabel>
        <ComboBox id="text-pick" label="文字選択" value="自動" width={61} disabled />
        <OptionLabel as="span">選択対象</OptionLabel>
        <Filters>
          {filters.map((t) => (
            <Filter key={t} type="button" $hot={t === "全要素"}>{t}</Filter>
          ))}
        </Filters>
        <PlainButton type="button">設定</PlainButton>
      </OptionRow>

      <WorkArea>
        <Canvas>
          <Drawing>
            <path
              d="M162 402L248 334L334 265L421 197L508 130L600 62L688 1"
              stroke="#d8d8d8"
              fill="none"
              shapeRendering="crispEdges"
            />
            {divisionPoints.map(([x, y]) => (
              <circle key={x} cx={x} cy={y} r="3" stroke="#d8d8d8" fill="none" />
            ))}
          </Drawing>
        </Canvas>
        <SidePanel>
          <PanelTools>
            <Pin />
            <Question />
            <Magnifier />
          </PanelTools>
          <CategoryGrid>
            {categories.map((t) => (
              <Category key={t} type="button" $on={t === "補助"}>{t}</Category>
            ))}
          </CategoryGrid>
          <CommandGrid>
            {commands.map((t) => (
              <Command key={t} type="button" $on={t === "等\n分割"}>{t}</Command>
            ))}
          </CommandGrid>
          <ModeBox>
            <Mode type="button"><Ball />要素指定</Mode>
            <Mode type="button"><Ball />２点指定</Mode>
          </ModeBox>
        </SidePanel>
      </WorkArea>

      <SheetBar>
        <SheetTab type="button">
          <span>1</span>
          <span>未設定</span>
        </SheetTab>
      </SheetBar>
      <StatusBar>
        {statusCells.map(([t, w], i) => (
          <StatusCell key={i} $w={w}>{t}</StatusCell>
        ))}
        <SizeGrip viewBox="0 0 14 14" aria-hidden="true">
          {line("M4 14L14 4M8 14L14 8", D, 2)}
        </SizeGrip>
      </StatusBar>
    </Page>
  );
}
